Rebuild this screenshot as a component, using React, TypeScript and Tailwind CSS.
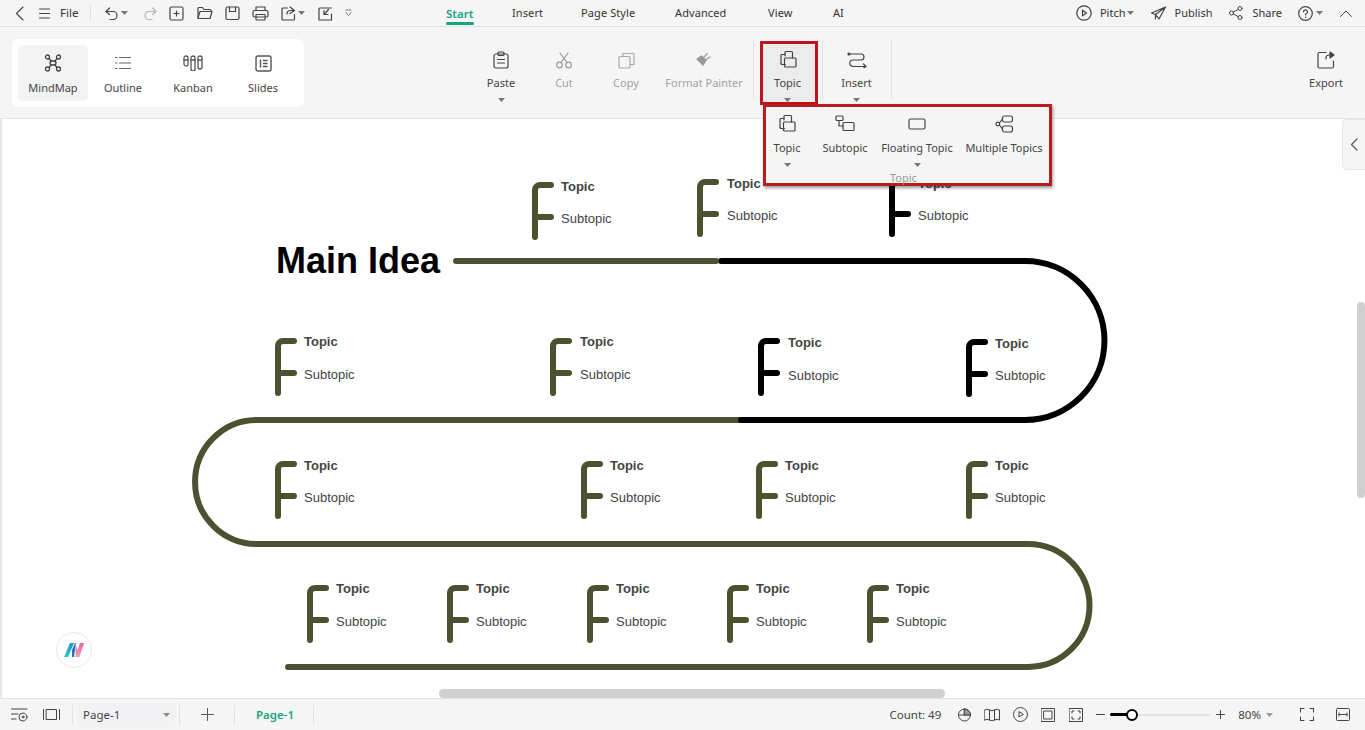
import React from "react";

const I = ({ w = 16, h = 16, c = "#444", sw = 1.2, children }: { w?: number; h?: number; c?: string; sw?: number; children: React.ReactNode }) => (
  <svg width={w} height={h} viewBox={`0 0 ${w} ${h}`} fill="none" stroke={c} strokeWidth={sw} strokeLinecap="round" strokeLinejoin="round" className="shrink-0 block">
    {children}
  </svg>
);

const Caret = ({ c = "#777" }: { c?: string }) => (
  <svg width="7" height="4" viewBox="0 0 7 4" className="shrink-0 block"><path d="M0 0h7L3.5 4z" fill={c} /></svg>
);

const TopicIcon = ({ c = "#444" }: { c?: string }) => (
  <I w={18} h={20} c={c} sw={1.2}><path d="M6 6V2.5a1 1 0 0 1 1-1h5.5a1 1 0 0 1 1 1V8" /><path d="M2 13.5V5.500a1 1 0 0 1 1-1h3" /><path d="M2 13.500a1 1 0 0 0 1 1h3.500" /><rect x="5.500" y="8" width="11.500" height="9" rx="1" /></I>
);
const SubtopicIcon = () => (
  <I w={20} h={18}><rect x="1" y="1" width="7" height="4.500" rx="1" /><path d="M4 5.500V11h4" /><rect x="8" y="7.500" width="11" height="8" rx="1" /></I>
);
const FloatIcon = () => (
  <I w={18} h={12}><rect x="1" y="1" width="16" height="10" rx="1.500" /></I>
);
const MultiIcon = () => (
  <I w={19} h={18}><circle cx="2.800" cy="9" r="1.800" /><path d="M4.500 8l3-4M4.500 10l3 4" /><rect x="7.500" y="1" width="10" height="6" rx="2" /><rect x="7.500" y="11" width="10" height="6" rx="2" /></I>
);

const Top = ({ x, children }: { x: number; children: React.ReactNode }) => (
  <div style={{ marginLeft: x }} className="flex items-center shrink-0">{children}</div>
);

const ViewBtn = ({ label, icon, active }: { label: string; icon: React.ReactNode; active?: boolean }) => (
  <div className={`w-[70px] h-[56px] rounded-[5px] flex flex-col items-center ${active ? "bg-[#f3f3f3]" : ""}`}>
    <div className="h-[18px] mt-[9px] flex items-center justify-center">{icon}</div>
    <div className="mt-[8px] text-[11px] leading-[16px] text-[#444]">{label}</div>
  </div>
);

const Rib = ({ w, label, icon, caret, dim, className = "" }: { w: number; label: string; icon: React.ReactNode; caret?: boolean; dim?: boolean; className?: string }) => (
  <div style={{ width: w }} className={`shrink-0 h-[64px] flex flex-col items-center ${className}`}>
    <div className="h-[20px] mt-[9px] flex items-center justify-center">{icon}</div>
    <div className={`mt-[5px] text-[11px] leading-[16px] whitespace-nowrap ${dim ? "text-[#a3a3a3]" : "text-[#444]"}`}>{label}</div>
    {caret && <div className="mt-[7px]"><Caret /></div>}
  </div>
);

const Sep = ({ h = "h-[52px]" }: { h?: string }) => <div className={`w-px ${h} bg-[#e2e2e2] shrink-0`} />;

const MenuItem = ({ w, ml, label, icon, caret }: { w: number; ml: number; label: string; icon: React.ReactNode; caret?: boolean }) => (
  <div style={{ width: w, marginLeft: ml }} className="shrink-0 flex flex-col items-center">
    <div className="h-[20px] flex items-center justify-center">{icon}</div>
    <div className="mt-[6px] text-[11px] leading-[16px] whitespace-nowrap text-[#444]">{label}</div>
    {caret && <div className="mt-[7px]"><Caret /></div>}
  </div>
);

type N = { fx: number; top: number; tx: number; ty: number; sy: number; c: string };
const G = "#4b5230";
const B = "#000000";
const nodes: N[] = [
  { fx: 535, top: 184, tx: 561, ty: 186, sy: 218, c: G },
  { fx: 700, top: 181, tx: 727, ty: 183, sy: 215, c: G },
  { fx: 892, top: 181, tx: 918, ty: 183, sy: 215, c: B },
  { fx: 278, top: 340, tx: 304, ty: 341, sy: 374, c: G },
  { fx: 553, top: 340, tx: 580, ty: 341, sy: 374, c: G },
  { fx: 761, top: 340, tx: 788, ty: 342, sy: 375, c: B },
  { fx: 969, top: 341, tx: 995, ty: 343, sy: 375, c: B },
  { fx: 278, top: 463, tx: 304, ty: 465, sy: 497, c: G },
  { fx: 584, top: 463, tx: 610, ty: 465, sy: 497, c: G },
  { fx: 759, top: 463, tx: 785, ty: 465, sy: 497, c: G },
  { fx: 969, top: 463, tx: 995, ty: 465, sy: 497, c: G },
  { fx: 310, top: 587, tx: 336, ty: 588, sy: 621, c: G },
  { fx: 450, top: 587, tx: 476, ty: 588, sy: 621, c: G },
  { fx: 590, top: 587, tx: 616, ty: 588, sy: 621, c: G },
  { fx: 730, top: 587, tx: 756, ty: 588, sy: 621, c: G },
  { fx: 870, top: 587, tx: 896, ty: 588, sy: 621, c: G },
];
const CT = 119;

export default function App() {
  return (
    <div className="relative w-[1365px] h-[730px] overflow-hidden bg-white text-[#333] font-['Noto_Sans','Open_Sans',sans-serif]">
      {/* top bar */}
      <div className="h-[27px] bg-[#f5f5f5] border-b border-[#e3e3e3] flex items-center relative text-[11px] text-[#333]">
        <Top x={15}><I w={9} h={15} sw={1.1}><path d="M8 1L1.500 7.500 8 14" /></I></Top>
        <Top x={15}><I w={11} h={11} sw={1.100}><path d="M0.500 1h10M0.500 5.500h10M0.500 10h10" /></I></Top>
        <Top x={10}><span className="text-[11.500px] leading-none">File</span></Top>
        <Top x={12}><Sep h="h-[16px]" /></Top>
        <Top x={14}><I w={13} h={13}><path d="M4.500 1L1 4.500 4.500 7.500" /><path d="M1 4.500h7a4 4 0 0 1 0 8H5" /></I><div className="ml-[3px]"><Caret /></div></Top>
        <Top x={16}><I w={13} h={13} c="#b5b5b5"><path d="M8.500 1L12 4.500 8.500 7.500" /><path d="M12 4.500H5a4 4 0 0 0 0 8h3" /></I></Top>
        <Top x={12}><I w={15} h={15}><rect x="1" y="1" width="13" height="13" rx="1.500" /><path d="M7.500 5v5M5 7.500h5" /></I></Top>
        <Top x={13}><I w={16} h={14}><path d="M1 12V2.500a1 1 0 0 1 1-1h3.500l1.500 2h6a1 1 0 0 1 1 1v1" /><path d="M1 12l2-6.500h12L13 12.500H2a1 1 0 0 1-1-.5z" /></I></Top>
        <Top x={12}><I w={15} h={15}><rect x="1" y="1" width="13" height="12.500" rx="1.500" /><path d="M4.500 1v4.500h6V1" /></I></Top>
        <Top x={12}><I w={17} h={15}><path d="M4 4.500V1h9v3.500" /><rect x="1" y="4.500" width="15" height="6.500" rx="1.500" /><rect x="4" y="8.500" width="9" height="5.500" rx="0.500" /></I></Top>
        <Top x={12}><I w={15} h={15}><path d="M13.500 8.500V13a1 1 0 0 1-1 1H2a1 1 0 0 1-1-1V3a1 1 0 0 1 1-1h4.500" /><path d="M9 1l4.500 3.500L9 7.500" /><path d="M13 4.500H9.500a3.500 3.500 0 0 0-3.500 3.500" /></I><div className="ml-[2px]"><Caret /></div></Top>
        <Top x={13}><I w={15} h={15}><path d="M13.500 2H2a1 1 0 0 0-1 1v11h12.500V8" /><path d="M10.500 3.500L6.500 8M6 4.500V8.500h4" /></I></Top>
        <Top x={12}><I w={7} h={8} c="#666" sw={0.9}><path d="M1 1h5M1 3.500L3.500 6.500 6 3.500" /></I></Top>
        <div className="absolute left-[446px] top-0 h-[26px] pt-[1px] flex items-center text-[11px] text-[#333]">
          <div className="relative w-[28px] h-full flex items-center font-semibold text-[#16a37f] text-[11.500px] mr-[38px]">Start<div className="absolute left-0 right-0 bottom-[1px] h-[3px] rounded-full bg-[#16a37f]" /></div>
          <span className="w-[69px] tracking-[0.1px]">Insert</span><span className="w-[94px] tracking-[0.1px]">Page Style</span><span className="w-[93px] tracking-[0.1px]">Advanced</span><span className="w-[65px] tracking-[0.1px]">View</span><span>AI</span>
        </div>
        <div className="ml-auto flex items-center text-[11px] mr-[13px]">
          <I w={16} h={16}><circle cx="8" cy="8" r="7.200" /><path d="M6.500 5.200v5.600L10.500 8z" /></I>
          <span className="ml-[8px]">Pitch</span><div className="ml-[2px]"><Caret /></div>
          <div className="ml-[17px]"><I w={15} h={14}><path d="M14.500 1L0.500 7l4 1.500L14.500 1 8 13l-3.500-4.500V13" /></I></div>
          <span className="ml-[8px]">Publish</span>
          <div className="ml-[17px]"><I w={14} h={14} sw={1}><circle cx="2.500" cy="7" r="2" /><circle cx="11" cy="2.500" r="2" /><circle cx="11" cy="11.500" r="2" /><path d="M4.300 6l5-2.700M4.300 8l5 2.700" /></I></div>
          <span className="ml-[9px]">Share</span>
          <div className="ml-[16px]"><I w={15} h={15}><circle cx="7.500" cy="7.500" r="6.800" /><path d="M5.500 5.800a2 2 0 1 1 2.800 1.900c-.6.300-.8.700-.8 1.300M7.500 11.200v.2" /></I></div>
          <div className="ml-[3px]"><Caret /></div>
          <div className="ml-[17px]"><I w={12} h={7} sw={1}><path d="M0.500 6.500L6 1l5.500 5.500" /></I></div>
        </div>
      </div>

      {/* ribbon */}
      <div className="h-[92px] bg-[#f5f5f5] border-b border-[#e3e3e3] flex items-start">
        <div className="ml-[12px] mt-[12px] w-[292px] h-[68px] bg-white rounded-[6px] flex p-[6px] shrink-0">
          <ViewBtn active label="MindMap" icon={<I w={18} h={18} sw={1.300}><circle cx="3.500" cy="3" r="2" /><circle cx="14.500" cy="3" r="2" /><circle cx="3.500" cy="15" r="2" /><circle cx="14.500" cy="15" r="2" /><path d="M5 4.500L7.500 7.500M13 4.500L10.500 7.500M5 13.500L7.500 10.500M13 13.500L10.500 10.500" /><rect x="6" y="7" width="6" height="4" rx="2" /></I>} />
          <ViewBtn label="Outline" icon={<I w={16} h={14} c="#666"><path d="M4.500 1.500H15.500M4.500 7H15.500M4.500 12.500H15.500M0.500 1.500H2M0.500 7H2M0.500 12.500H2" /></I>} />
          <ViewBtn label="Kanban" icon={<I w={20} h={16} c="#555" sw={1.300}><rect x="1" y="1" width="4" height="10" rx="2" /><rect x="8" y="1" width="4" height="15" rx="2" /><rect x="15" y="1" width="4" height="13" rx="2" /><path d="M1 5h4M8 5h4M15 5h4" /></I>} />
          <ViewBtn label="Slides" icon={<I w={17} h={17} c="#555" sw={1.400}><rect x="1" y="1" width="15" height="15" rx="2" /><path d="M5.500 5v7M8.500 5.500h3.500M8.500 8.500h3.500M8.500 11.500h3.500" /></I>} />
        </div>
        <div className="flex items-start ml-[167px] mt-[14px]">
          <Rib w={60} label="Paste" caret icon={<I w={16} h={18}><rect x="1" y="3" width="14" height="14" rx="2" /><rect x="5" y="1" width="6" height="3.500" rx="1" /><path d="M4.500 8.500h7M4.500 12h7" /></I>} />
          <Rib w={66} dim label="Cut" icon={<I w={16} h={17} c="#999"><circle cx="3.500" cy="13" r="2.800" /><circle cx="12.500" cy="13" r="2.800" /><path d="M5 10.500L12 1M11 10.500L4 1" /></I>} />
          <Rib w={58} dim label="Copy" icon={<I w={17} h={17} c="#aaa"><rect x="1" y="4.500" width="11" height="11.500" rx="1" /><path d="M5 4.500V1.500h11v11h-4" /></I>} />
          <Rib w={98} dim label="Format Painter" icon={<I w={17} h={17} c="#999" sw={1.300}><path d="M1 7l6 6 3-4.500-4.500-4.500z" fill="#999" /><path d="M8 5l3.500-3.500M10 7.500l4-2.500" /></I>} />
          <div className="mt-[-1px]"><Sep h="h-[59px]" /></div>
          <Rib w={56} label="Topic" caret className="ml-[7px] pr-[3px] bg-[#ececec]" icon={<TopicIcon />} />
          <div className="ml-[5px] mt-[-1px]"><Sep h="h-[59px]" /></div>
          <Rib w={67} label="Insert" caret icon={<I w={20} h={16}><circle cx="2" cy="2" r="1" fill="#444" /><path d="M2 2h12a3 3 0 0 1 0 6H6a3 3 0 0 0 0 6.500h13M16.500 12l2.500 2.500-2.500 1.500" /></I>} />
          <div className="ml-[1px] mt-[-1px]"><Sep h="h-[59px]" /></div>
        </div>
        <div className="ml-auto mr-[14px] mt-[14px] flex">
          <Rib w={50} label="Export" icon={<I w={18} h={18}><path d="M16.500 10v5.500a1.500 1.500 0 0 1-1.500 1.500H2.500A1.500 1.500 0 0 1 1 15.500V3a1.500 1.500 0 0 1 1.500-1.500H9" /><path d="M13 1l4 3-4 3z" fill="#444" /><path d="M14 4h-2a3 3 0 0 0-3 3v1" /></I>} />
        </div>
      </div>

      {/* canvas */}
      <div className="relative h-[579px] bg-white border-l-2 border-[#e8e8e8] overflow-hidden">
        <svg width="1365" height="579" viewBox={`0 ${CT} 1365 579`} fill="none" strokeLinecap="round" strokeLinejoin="round" className="absolute left-[-2px] top-0">
          <path d="M740 420H257A62 62 0 0 0 257 544H1028A61.500 61.500 0 0 1 1028 667H288" stroke={G} strokeWidth="6" />
          <path d="M721 261H1025A79.500 79.500 0 0 1 1025 420H741" stroke={B} strokeWidth="6" />
          <path d="M456 261H716" stroke={G} strokeWidth="6" />
          {nodes.map((n, i) => (
            <path key={i} d={`M${n.fx} ${n.top + 53}V${n.top + 6}a5 5 0 0 1 5-5H${n.fx + 16}M${n.fx} ${n.top + 33}H${n.fx + 16}`} stroke={n.c} strokeWidth="6" />
          ))}
        </svg>
        <div className="absolute left-[274px] top-[121px] text-[36px] leading-[42px] font-bold text-black font-['Liberation_Sans',sans-serif] whitespace-nowrap">Main Idea</div>
        {nodes.map((n, i) => (
          <React.Fragment key={i}>
            <div style={{ left: n.tx - 2, top: n.ty - CT - 7 }} className="absolute text-[13px] leading-[16px] font-bold text-[#444] font-['Liberation_Sans',sans-serif]">Topic</div>
            <div style={{ left: n.tx - 2, top: n.sy - CT - 7 }} className="absolute text-[13px] leading-[16px] text-[#444] font-['Liberation_Sans',sans-serif]">Subtopic</div>
          </React.Fragment>
        ))}
        {/* logo */}
        <div className="absolute left-[54px] top-[513px] w-[36px] h-[36px] rounded-full bg-white border border-[#e8e8e8] flex items-center justify-center">
          <svg width="20" height="16" viewBox="0 0 20 16"><defs><linearGradient id="m1" x1="0" y1="1" x2="1" y2="0"><stop offset="0" stopColor="#23d3c3" /><stop offset="1" stopColor="#1f8fd0" /></linearGradient><linearGradient id="m2" x1="0" y1="1" x2="1" y2="0"><stop offset="0" stopColor="#f0b8a8" /><stop offset="1" stopColor="#e84fb0" /></linearGradient></defs><path d="M0 15L6 1h4L4 15z" fill="url(#m1)" /><path d="M8 8l3-7h1l-2 14H8z" fill="#2a6fc0" /><path d="M11 15L16 1h4L15.500 15z" fill="url(#m2)" /><path d="M11 1l3 8-2 6z" fill="#d98ab8" /></svg>
        </div>
        {/* side tab */}
        <div className="absolute right-0 top-0 w-[23px] h-[51px] bg-[#f5f5f5] border border-r-0 border-[#e6e6e6] rounded-l-[5px] flex items-center justify-center">
          <I w={8} h={13} c="#555" sw={1.200}><path d="M7 1L1.500 6.500 7 12" /></I>
        </div>
        {/* scrollbars */}
        <div className="absolute right-0 top-[183px] w-[8px] h-[196px] bg-[#d0d0d0] rounded-[4px]" />
        <div className="absolute left-[437px] top-[570px] w-[506px] h-[9px] bg-[#d0d0d0] rounded-full" />
      </div>

      {/* status */}
      <div className="h-[32px] bg-[#f5f5f5] border-t border-[#e3e3e3] flex items-center text-[11.500px] text-[#444]">
        <Top x={11}><I w={17} h={14} sw={1}><path d="M0.500 1H16M0.500 6H7M0.500 11H5" /><circle cx="12" cy="9" r="4" /><circle cx="12" cy="9" r="1" /></I></Top>
        <Top x={15}><I w={17} h={11} sw={1}><path d="M0.500 0.500v10M16.500 0.500v10" /><rect x="3.500" y="0.500" width="10" height="10" /></I></Top>
        <Top x={12}><Sep h="h-[20px]" /></Top>
        <Top x={4}>
          <div className="w-[98px] h-[24px] rounded-[4px] bg-[#f2f2f4] flex items-center pl-[6px] pr-[5px] justify-between"><span>Page-1</span><Caret c="#888" /></div>
        </Top>
        <Top x={4}><Sep h="h-[20px]" /></Top>
        <Top x={21}><I w={13} h={13} c="#555" sw={1}><path d="M6.500 0.500v12M0.500 6.500h12" /></I></Top>
        <Top x={20}><Sep h="h-[20px]" /></Top>
        <Top x={21}><span className="font-semibold text-[#16a37f]">Page-1</span></Top>
        <Top x={19}><Sep h="h-[20px]" /></Top>
        <div className="ml-auto flex items-center mr-[15px]">
          <span className="text-[11.500px]">Count: 49</span>
          <div className="ml-[17px]"><I w={13} h={14} sw={1}><circle cx="6.500" cy="7" r="6" /><path d="M0.500 7h12M6.500 1v6" /><path d="M6.500 1a6 6 0 0 1 6 6h-6z" fill="#999" /></I></div>
          <div className="ml-[13px]"><I w={16} h={13} sw={1}><path d="M0.500 2Q3 0.500 5.500 2T10.500 2 15.500 2V12Q13 10.500 10.500 12T5.500 12 0.500 12zM5.500 2V12M10.500 2V12" /></I></div>
          <div className="ml-[13px]"><I w={15} h={15} sw={1}><circle cx="7.500" cy="7.500" r="7" /><path d="M6 5v5l4-2.500z" /></I></div>
          <div className="ml-[13px]"><I w={14} h={14} sw={1}><rect x="0.500" y="0.500" width="13" height="13" /><rect x="3" y="3" width="8" height="8" /></I></div>
          <div className="ml-[14px]"><I w={14} h={14} sw={1}><rect x="0.500" y="0.500" width="13" height="13" /><path d="M3 5V3h2M11 5V3H9M3 9v2h2M11 9v2H9" /></I></div>
          <div className="ml-[13px]"><I w={9} h={9} sw={1}><path d="M0.500 4.500h8" /></I></div>
          <div className="ml-[5px] relative w-[100px] h-[2px] bg-[#e3e3e3]">
            <div className="absolute left-0 top-[-0.500px] h-[3px] w-[22px] bg-black rounded-full" />
            <div className="absolute left-[16px] top-[-5px] w-[12px] h-[12px] rounded-full bg-white border-[2.500px] border-black" />
          </div>
          <div className="ml-[6px]"><I w={9} h={9} sw={1}><path d="M0.500 4.500h8M4.500 0.500v8" /></I></div>
          <span className="ml-[13px] text-[11.500px]">80%</span>
          <div className="ml-[5px]"><Caret c="#999" /></div>
          <div className="ml-[27px]"><I w={14} h={13} sw={1.100}><path d="M0.500 4V0.500H4M10 0.500h3.500V4M0.500 9v3.500H4M10 12.500h3.500V9" /></I></div>
          <div className="ml-[22px]"><I w={14} h={13} sw={1}><rect x="0.500" y="0.500" width="13" height="12" rx="1" /><path d="M3 6.500h8M3 5v3M11 5v3" /></I></div>
        </div>
      </div>

      {/* red highlight on Topic */}
      <div className="absolute left-[760px] top-[41px] w-[58px] h-[64px] border-[3px] border-[#c1121f] pointer-events-none" />
      {/* popover */}
      <div className="absolute left-[763px] top-[104px] w-[289px] h-[82px] bg-[#f5f5f5] border-[3px] border-[#b91c1c] shadow-[1px_2px_3px_rgba(0,0,0,0.4)] flex flex-col">
        <div className="flex items-start pt-[7px]">
          <MenuItem ml={1} w={40} label="Topic" caret icon={<TopicIcon />} />
          <MenuItem ml={13} w={50} label="Subtopic" icon={<SubtopicIcon />} />
          <MenuItem ml={10} w={74} label="Floating Topic" caret icon={<FloatIcon />} />
          <MenuItem ml={11} w={78} label="Multiple Topics" icon={<MultiIcon />} />
        </div>
        <div className="absolute left-[124px] top-[64px] text-[11px] leading-[14px] text-[#9a9a9a]">Topic</div>
      </div>
    </div>
  );
}
